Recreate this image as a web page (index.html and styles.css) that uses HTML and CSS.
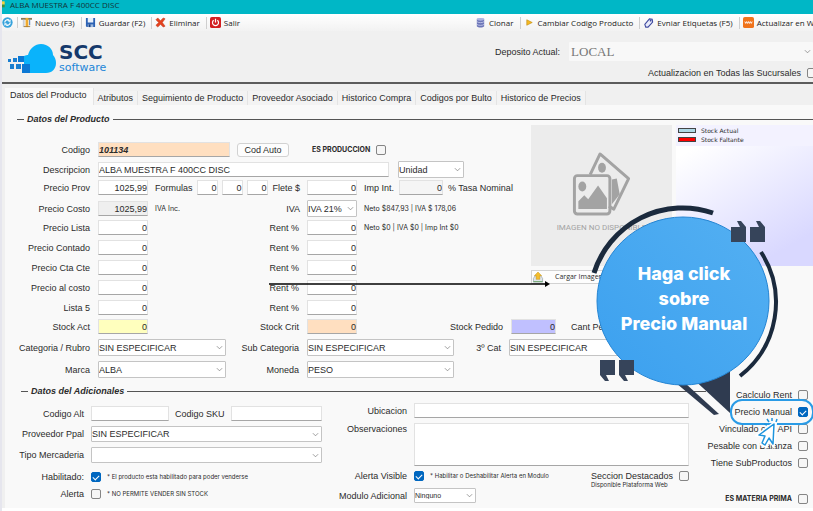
FILE: index.html
```html
<!DOCTYPE html>
<html lang="es">
<head>
  <meta charset="UTF-8" />
  <meta name="viewport" content="width=device-width, initial-scale=1.0"/>
  <title>ALBA MUESTRA F 400CC DISC</title>
  <link rel="stylesheet" href="styles.css">
</head>
<body>
  <div class="window">
    <div class="title-bar">
      <svg class="title-icon" viewBox="0 0 6 10"><rect width="4" height="5" y="1" fill="#f5d13c"/><rect width="4" height="4" y="6" fill="#3f8f3c"/></svg>
      <span>ALBA MUESTRA F 400CC DISC</span>
    </div>

    <div class="toolbar">
      <div class="tools">
        <button class="tool" aria-label="Actualizar">
          <svg viewBox="0 0 12 12"><circle cx="6" cy="6" r="5.6" fill="#38a3dc"/><path d="M3 6a3 3 0 0 1 5-2.2M9 6a3 3 0 0 1-5 2.2" fill="none" stroke="#fff" stroke-width="1.4"/><path d="M9.4 2.4v2.8H6.6zM2.6 9.600V6.800h2.800z" fill="#fff"/></svg>
        </button>
        <button class="tool">
          <svg viewBox="0 0 12 12"><path d="M0 1h12v2H0z" fill="#8d7a55"/><path d="M2 3h2v8H2z" fill="#c9ced6"/><path d="M5 1h3v10H5z" fill="#efaa2f"/><path d="M9 3h1v6H9z" fill="#3d6fb5"/><path d="M3 10h7v1H3z" fill="#a77c38"/></svg>
          Nuevo (F3)
        </button>
        <button class="tool">
          <svg viewBox="0 0 12 12"><path d="M1 1h10v10H2L1 10z" fill="#2c62b4"/><path d="M3 1h6v5H3z" fill="#e9f0fa"/><path d="M3 8h6v3H3z" fill="#9db9de"/><path d="M4 8h2v3H4z" fill="#173f80"/></svg>
          Guardar (F2)
        </button>
        <button class="tool">
          <svg viewBox="0 0 12 12"><path d="M1 3l2-2 3 3 3-3 2 1-3 4 3 4-2 1-3-3-3 3-2-2 3-3z" fill="#e5431f" stroke="#b52c10" stroke-width=".5"/></svg>
          Eliminar
        </button>
        <button class="tool">
          <svg viewBox="0 0 12 12"><rect width="12" height="12" rx="2" fill="#d31f22"/><path d="M4 3.500a3.300 3.300 0 1 0 4 0M6 2v4" fill="none" stroke="#fff" stroke-width="1.300"/></svg>
          Salir
        </button>
      </div>
      <div class="tools tools-right">
        <button class="tool">
          <svg viewBox="0 0 12 12"><path d="M2 2v8c1 2 7 2 8 0V2z" fill="#6d76b8"/><ellipse cx="6" cy="2.500" rx="4" ry="1.500" fill="#aeb5e2"/><path d="M2 5c1 1.500 7 1.500 8 0M2 8c1 1.500 7 1.500 8 0" fill="none" stroke="#d5d9f3" stroke-width=".8"/></svg>
          Clonar
        </button>
        <button class="tool">
          <svg viewBox="0 0 12 12"><path d="M3 3l6 3-6 3z" fill="#f5b921" stroke="#b98208" stroke-width=".6"/></svg>
          Cambiar Codigo Producto
        </button>
        <button class="tool">
          <svg viewBox="0 0 12 12"><path d="M2 8l5-6 3 .5.500 3-5 5.500H3z" fill="#e9ebfa" stroke="#3f4aa0" stroke-width="1.200"/><circle cx="8.300" cy="4" r="1" fill="#3f4aa0"/></svg>
          Evniar Etiquetas (F5)
        </button>
        <button class="tool">
          <svg viewBox="0 0 12 12"><rect width="12" height="12" rx="2" fill="#f0731b"/><path d="M2 5l1 2 1-2 1 2 1-2 1 2 1-2 1 2 1-2" fill="none" stroke="#fff" stroke-width="1"/></svg>
          Actualizar en Web
        </button>
      </div>
    </div>

    <header>
      <div class="logo">
        <svg class="logo-cloud" viewBox="0 0 48 30">
          <path d="M16 29V12c2-1 3-1 4-1C22 4 27 0 33 0c7 0 12 5 12 11 2 2 3 5 3 8 0 6-4 10-10 10z" fill="#0ab3fb" />
          <path d="M10 12h6v6h-6zM14 20h8v9h-8z" fill="#0b78d4"/>
          <path d="M5 14h4v4H5zM8 20h5v5H8zM2 20h4v5H2zM0 15h3v3H0z" fill="#1a7fd0"/>
        </svg>
        <div class="logo-text">
          <strong>SCC</strong>
          <span>software</span>
        </div>
      </div>
      <div class="branch">
        <div class="branch-row">
          <label for="deposito">Deposito Actual:</label>
          <select id="deposito" class="deposito" disabled><option>LOCAL</option></select>
        </div>
        <div class="branch-row branch-all">
          <label for="todas">Actualizacion en Todas las Sucursales</label>
          <input type="checkbox" id="todas">
        </div>
      </div>
    </header>

    <nav class="tabs">
      <a href="#producto" class="active">Datos del Producto</a>
      <a href="#atributos">Atributos</a>
      <a href="#seguimiento">Seguimiento de Producto</a>
      <a href="#proveedor">Proveedor Asociado</a>
      <a href="#compra">Historico Compra</a>
      <a href="#bulto">Codigos por Bulto</a>
      <a href="#precios">Historico de Precios</a>
    </nav>

    <main class="panel" id="producto">
      <h2 class="section-title">Datos del Producto</h2>

      <div class="product-top">
        <div class="product-form">
          <div class="rows rows-tight">
            <div class="code-row">
              <label for="codigo">Codigo</label>
              <input type="text" id="codigo" class="code" value="101134">
              <button class="btn">Cod Auto</button>
              <span class="check strong">
                <label for="produccion">ES PRODUCCION</label>
                <input type="checkbox" id="produccion">
              </span>
            </div>
            <div class="desc-row">
              <label for="descripcion">Descripcion</label>
              <input type="text" id="descripcion" value="ALBA MUESTRA F 400CC DISC">
              <select aria-label="Unidad"><option>Unidad</option></select>
            </div>
            <div class="price-row">
              <label for="prov">Precio Prov</label>
              <input type="text" id="prov" class="num" value="1025,99">
              <div class="formulas">
                <label for="f1">Formulas</label>
                <input type="text" id="f1" class="num" value="0">
                <input type="text" aria-label="Formula 2" class="num" value="0">
                <input type="text" aria-label="Formula 3" class="num" value="0">
                <label for="flete" class="flete">Flete $</label>
              </div>
              <input type="text" id="flete" class="num" value="0">
              <div class="tax">
                <label for="imp">Imp Int.</label>
                <input type="text" id="imp" class="num readonly" value="0" readonly>
                <span>% Tasa Nominal</span>
              </div>
            </div>
          </div>

          <div class="rows">
            <div class="price-row">
              <label for="costo">Precio Costo</label>
              <input type="text" id="costo" class="num gray" value="1025,99" readonly>
              <div class="iva"><small>IVA Inc.</small><label for="iva">IVA</label></div>
              <select id="iva"><option>IVA 21%</option></select>
              <small class="net">Neto $847,93 | IVA $ 178,06</small>
            </div>
            <div class="price-row">
              <label for="lista">Precio Lista</label>
              <input type="text" id="lista" class="num" value="0">
              <label for="r1">Rent %</label>
              <input type="text" id="r1" class="num" value="0">
              <small class="net">Neto $0 | IVA $0 | Imp Int $0</small>
            </div>
            <div class="price-row">
              <label for="contado">Precio Contado</label>
              <input type="text" id="contado" class="num" value="0">
              <label for="r2">Rent %</label>
              <input type="text" id="r2" class="num" value="0">
            </div>
            <div class="price-row">
              <label for="cta">Precio Cta Cte</label>
              <input type="text" id="cta" class="num" value="0">
              <label for="r3">Rent %</label>
              <input type="text" id="r3" class="num" value="0">
            </div>
            <div class="price-row">
              <label for="alcosto">Precio al costo</label>
              <input type="text" id="alcosto" class="num" value="0">
              <label for="r4">Rent %</label>
              <input type="text" id="r4" class="num" value="0">
            </div>
            <div class="price-row">
              <label for="lista5">Lista 5</label>
              <input type="text" id="lista5" class="num" value="0">
              <label for="r5">Rent %</label>
              <input type="text" id="r5" class="num" value="0">
            </div>
          </div>
        </div>

        <div class="media">
          <div class="picture">
            <svg viewBox="0 0 60 66">
              <g fill="none" stroke="#a3a3a3" stroke-width="3" stroke-linejoin="round">
                <path d="M18 23L28 2l29 25-15 31-5-3"/>
                <rect x="2" y="24" width="36" height="39" rx="3"/>
              </g>
              <g fill="#a3a3a3">
                <ellipse cx="30" cy="16" rx="4" ry="5"/>
                <ellipse cx="10" cy="35" rx="4" ry="5"/>
                <path d="M6 58V50l6-6 4 4 10-14 9 13v11zM40 28l5-1 3 16-8 10z"/>
              </g>
            </svg>
            <span>IMAGEN NO DISPONIBLE</span>
          </div>
          <div class="chart">
            <ul class="chart-legend">
              <li><i class="swatch actual"></i>Stock Actual</li>
              <li><i class="swatch faltante"></i>Stock Faltante</li>
            </ul>
          </div>
          <button class="btn upload">
            <svg viewBox="0 0 12 12"><path d="M1 7l2-3h6l2 3v4H1z" fill="#dfe6ea" stroke="#8d9aa3" stroke-width=".7"/><path d="M1 10h10v1H1z" fill="#6ba56a"/><path d="M6 0l4 4H8v4H4V4H2z" fill="#f3bd2d" stroke="#c58f10" stroke-width=".5"/></svg>
            Cargar Imagen
          </button>
        </div>
      </div>

      <div class="stock-row">
        <label for="stock">Stock Act</label>
        <input type="text" id="stock" class="num yellow" value="0">
        <label for="crit">Stock Crit</label>
        <input type="text" id="crit" class="num peach" value="0">
        <label for="pedido">Stock Pedido</label>
        <input type="text" id="pedido" class="num violet" value="0">
        <span class="cant">Cant Pedido</span>
      </div>
      <div class="category-row">
        <label for="categoria">Categoria / Rubro</label>
        <select id="categoria"><option>SIN ESPECIFICAR</option></select>
        <label for="subcat">Sub Categoria</label>
        <select id="subcat"><option>SIN ESPECIFICAR</option></select>
        <label for="cat3">3º Cat</label>
        <select id="cat3"><option>SIN ESPECIFICAR</option></select>
      </div>
      <div class="category-row">
        <label for="marca">Marca</label>
        <select id="marca"><option>ALBA</option></select>
        <label for="moneda">Moneda</label>
        <select id="moneda"><option>PESO</option></select>
      </div>

      <div class="extra">
        <div class="extra-main">
          <h2 class="section-title">Datos del Adicionales</h2>
          <div class="extra-grid">
            <div class="extra-left">
              <div class="extra-row">
                <label for="alt">Codigo Alt</label>
                <input type="text" id="alt" class="alt">
                <label for="sku" class="sku-label">Codigo SKU</label>
                <input type="text" id="sku" class="fill">
              </div>
              <div class="extra-row">
                <label for="ppal">Proveedor Ppal</label>
                <select id="ppal" class="fill"><option>SIN ESPECIFICAR</option></select>
              </div>
              <div class="extra-row">
                <label for="tipo">Tipo Mercaderia</label>
                <select id="tipo" class="fill"><option></option></select>
              </div>
              <div class="extra-row flag first-flag">
                <label for="habilitado">Habilitado:</label>
                <input type="checkbox" id="habilitado" checked>
                <small>* El producto esta habilitado para poder venderse</small>
              </div>
              <div class="extra-row flag">
                <label for="alerta">Alerta</label>
                <input type="checkbox" id="alerta">
                <small>* NO PERMITE VENDER SIN STOCK</small>
              </div>
            </div>

            <div class="extra-center">
              <div class="extra-row">
                <label for="ubicacion">Ubicacion</label>
                <input type="text" id="ubicacion" class="fill">
              </div>
              <div class="extra-row notes">
                <label for="obs">Observaciones</label>
                <textarea id="obs" class="fill"></textarea>
              </div>
              <div class="extra-row flag">
                <label for="visible">Alerta Visible</label>
                <input type="checkbox" id="visible" checked>
                <small>* Habilitar o Deshabilitar Alerta en Modulo</small>
                <span class="check featured">
                  <label for="destacados">Seccion Destacados <small>Disponible Plataforma Web</small></label>
                  <input type="checkbox" id="destacados">
                </span>
              </div>
              <div class="extra-row module">
                <label for="modulo">Modulo Adicional</label>
                <select id="modulo"><option>Ninguno</option></select>
              </div>
            </div>
          </div>
        </div>

        <div class="options">
          <span class="check"><label for="rent">Caclculo Rent</label><input type="checkbox" id="rent"></span>
          <span class="check"><label for="manual">Precio Manual</label><input type="checkbox" id="manual" checked></span>
          <span class="check"><label for="api">Vinculado con API</label><input type="checkbox" id="api"></span>
          <span class="check"><label for="balanza">Pesable con Balanza</label><input type="checkbox" id="balanza"></span>
          <span class="check"><label for="sub">Tiene SubProductos</label><input type="checkbox" id="sub"></span>
          <span class="check strong last"><label for="materia">ES MATERIA PRIMA</label><input type="checkbox" id="materia"></span>
        </div>
      </div>
    </main>

    <svg class="overlay" width="813" height="511" viewBox="0 0 813 511">
      <defs>
        <linearGradient id="bubble" x1="0" y1="1" x2="1" y2="0">
          <stop offset="0" stop-color="#3ba0ef"/>
          <stop offset="1" stop-color="#54b0f2"/>
        </linearGradient>
      </defs>
      <!-- pointer line -->
      <path d="M269 284h277" stroke="#000" stroke-width="1.500"/>
      <path d="M545 281l5 3-5 3z" fill="#000"/>
      <!-- bubble tail -->
      <path d="M690 376l40-8v45z" fill="#2f3b50"/>
      <path d="M676 383l9 0 34 31-5 1z" fill="#2f3b50"/>
      <!-- bubble and rings -->
      <ellipse cx="683" cy="301" rx="86" ry="84" fill="url(#bubble)" stroke="#2585d3"/>
      <path d="M594 273A93 93 0 0 1 713 213" fill="none" stroke="#1b2a3d" stroke-width="5"/>
      <path d="M761 252A93 93 0 0 1 740 376" fill="none" stroke="#1b2a3d" stroke-width="4"/>
      <!-- quotes -->
      <g fill="#36445a">
        <path d="M731 227h9l-3-6h4l5 6v15h-15zM750 227h9l-3-6h4l5 6v15h-15z"/>
        <path d="M600 360h15v15h-9l3 6h-4l-5-6zM619 360h15v15h-9l3 6h-4l-5-6z"/>
      </g>
      <!-- highlighted option -->
      <rect x="731" y="400" width="82" height="24" rx="11" fill="none" stroke="#2a9be6" stroke-width="2"/>
      <!-- cursor -->
      <path d="M775 423l-16 12 6 1-3 8 4 2 3-8 4 6z" fill="#fff" stroke="#fff" stroke-width="4"/>
      <path d="M774 424l-15 11 6 1-3 7 3 2 4-7 4 6z" fill="#fff" stroke="#1d94dd" stroke-width="1.500" stroke-linejoin="round"/>
      <path d="M772 418v3M767 419l2 3M777 419l-1 3M764 424l3 1" stroke="#1d94dd" stroke-width="1.500"/>
    </svg>
    <div class="callout">Haga click<br>sobre<br>Precio Manual</div>
  </div>
</body>
</html>
```

FILE: styles.css
```css
:root {
  --text: #2b2b2b;
  --window-bg: #f0f0f0;
  --panel-bg: #f9f9f9;
  --border: #e2e2e2;
  --border-dark: #a6a6a6;
  --teal: #00b7c6;
  --accent: #0067c0;
  --ui-font: "Open Sans", "Noto Sans", sans-serif;
  --small-font: Inter, "Liberation Sans", sans-serif;
}

* {
  margin: 0;
  padding: 0;
  box-sizing: border-box;
}
body {
  font-family: "Liberation Sans", Arial, sans-serif;
  font-size: 9px;
  line-height: 12px;
  color: var(--text);
  background: #fff;
  border-left: 2px solid #e6e6ee;
  overflow: hidden;
  min-height: 100vh;
}
.window {
  background: var(--window-bg);
}
label,
small,
span {
  white-space: nowrap;
}
small {
  font-family: var(--small-font);
  font-size: 7px;
}

.title-bar {
  background: var(--teal);
  height: 14px;
  display: flex;
  gap: 4px;
  font-family: var(--ui-font);
  font-size: 8px;
  line-height: 10px;
  color: #12343a;
}
.title-icon {
  width: 4px;
  height: 8px;
}

.toolbar {
  display: flex;
  justify-content: space-between;
  height: 17px;
  background: linear-gradient(#fff, #f2f2f2);
}
.tools {
  display: flex;
  align-items: center;
}
.tools-right {
  flex: 0 0 338px;
  overflow: hidden;
}
.tool {
  display: flex;
  flex: none;
  align-items: center;
  gap: 3px;
  padding: 0 6px 0 3px;
  border: none;
  border-right: 1px solid #cfcfcf;
  background: none;
  font-family: var(--ui-font);
  font-size: 8px;
  line-height: 12px;
  color: #222;
  white-space: nowrap;
}
.tool:first-child {
  padding-left: 0;
}
.tools:first-child .tool:first-child {
  padding-right: 4px;
}
.tool:last-child {
  border-right: none;
}
.tool svg {
  width: 11px;
  height: 11px;
}

header {
  display: flex;
  justify-content: space-between;
  height: 53px;
  padding: 11px 0 0 6px;
  border-bottom: 2px solid #5c5c5c;
}
.logo {
  display: flex;
  gap: 3px;
  padding-top: 2px;
}
.logo-cloud {
  width: 48px;
  height: 30px;
}
.logo-text {
  font-family: "DejaVu Sans", sans-serif;
  display: flex;
  flex-direction: column;
}
.logo-text strong {
  font-size: 20px;
  line-height: 17px;
  color: #15396b;
}
.logo-text span {
  font-size: 11px;
  line-height: 13px;
  color: #1c86d8;
}
.branch {
  flex: 0 0 318px;
}
.branch-row {
  display: flex;
  align-items: center;
  gap: 9px;
}
select.deposito {
  flex: 1;
  height: 19px;
  padding: 0 2px;
  border: none;
  font-family: "Liberation Serif", serif;
  font-size: 13px;
  color: #777;
  background-color: #f8f8f8;
  opacity: 1;
}
.branch-all {
  justify-content: flex-end;
  gap: 6px;
  margin: 6px -4px 0 0;
}

.tabs {
  display: flex;
  align-items: flex-end;
  padding: 4px 0 0 3px;
}
.tabs a {
  padding: 1px 4px;
  border-right: 1px solid #e4e4e4;
  background: #f3f3f3;
  color: var(--text);
  text-decoration: none;
}
.tabs .active {
  padding: 1px 6px 4px 5px;
  background: var(--panel-bg);
}

.panel {
  margin-left: 3px;
  padding: 8px 0 4px;
  background: var(--panel-bg);
}
.section-title {
  display: flex;
  align-items: center;
  gap: 3px;
  padding-left: 12px;
  font-size: 9px;
  line-height: 12px;
  font-style: italic;
}
.section-title::before,
.section-title::after {
  content: '';
  height: 1px;
  background: #555;
}
.section-title::before {
  width: 7px;
}
.section-title::after {
  flex: 1;
}

/* fields */
input[type="text"],
textarea,
select {
  width: 100%;
  min-width: 0;
  height: 15px;
  padding: 0 1px;
  border: 1px solid var(--border);
  border-bottom-color: var(--border-dark);
  background-color: #fff;
  font-family: inherit;
  font-size: 9px;
  color: var(--text);
}
input[type="text"] {
  padding: 0;
}
textarea {
  height: 43px;
  resize: none;
}
select {
  appearance: none;
  height: 17px;
  padding: 0;
  border: 1px solid #c4c4c4;
  border-radius: 1px;
  background-image: url("data:image/svg+xml,%3Csvg xmlns='http://www.w3.org/2000/svg' viewBox='0 0 8 5'%3E%3Cpath d='M1 1l3 3 3-3' fill='none' stroke='%23777' stroke-width='.8'/%3E%3C/svg%3E");
  background-repeat: no-repeat;
  background-position: right 2px center;
  background-size: 7px 5px;
}
input[type="checkbox"] {
  appearance: none;
  display: grid;
  place-items: center;
  flex: none;
  width: 10px;
  height: 10px;
  border: 1px solid #858585;
  border-radius: 2px;
  background: #f6f6f6;
}
input[type="checkbox"]:checked {
  border-color: var(--accent);
  background: var(--accent);
}
input[type="checkbox"]:checked::after {
  content: '';
  width: 5px;
  height: 3px;
  border: solid #fff;
  border-width: 0 0 1px 1px;
  transform: rotate(-45deg);
}
input.num {
  text-align: right;
}
input.gray {
  background: #efefef;
}
input.readonly {
  background: #f5f5f5;
}
input.yellow {
  background: #ffffbe;
}
input.peach,
input.code {
  background: #ffdfc0;
}
input.violet {
  background: #c0c0ff;
}
input.code {
  font-weight: bold;
  font-style: italic;
}
.btn {
  height: 14px;
  border: 1px solid #d2d2d2;
  border-radius: 3px;
  background: #fdfdfd;
  font-family: inherit;
  font-size: 9px;
  line-height: 12px;
  color: var(--text);
}
.check {
  display: flex;
  align-items: center;
  gap: 6px;
}
.strong {
  font-family: var(--small-font);
  font-size: 7px;
  font-weight: bold;
}

/* product data */
.product-top {
  display: flex;
}
.product-form {
  flex: 0 0 526px;
  padding-top: 17px;
}
.rows {
  display: flex;
  flex-direction: column;
  gap: 5px;
}
.rows-tight {
  gap: 4px;
  margin-bottom: 5px;
}
.code-row,
.desc-row,
.price-row,
.stock-row,
.category-row {
  display: grid;
  align-items: center;
  column-gap: 7px;
  height: 15px;
}
.code-row > label,
.desc-row > label,
.price-row > label,
.stock-row > label,
.category-row > label {
  padding-right: 1px;
  text-align: right;
}
.code-row {
  grid-template-columns: 86px 132px 52px 1fr;
}
.code-row .check {
  padding-left: 16px;
}
.desc-row {
  grid-template-columns: 86px 291px 66px;
}
.desc-row select {
  margin-left: 2px;
}
.price-row {
  grid-template-columns: 86px 50px 145px 50px 1fr;
}
.formulas,
.tax,
.iva {
  display: flex;
  align-items: center;
}
.formulas {
  gap: 4px;
}
.formulas input[type="text"] {
  flex: 0 0 21px;
}
.flete {
  margin-left: auto;
}
.tax {
  gap: 5px;
}
.tax input[type="text"] {
  flex: 0 0 44px;
}
.iva {
  justify-content: space-between;
}
.stock-row {
  grid-template-columns: 86px 50px 145px 50px 140px 45px 1fr;
  margin-top: 4px;
}
.cant {
  padding-left: 8px;
}
.category-row {
  grid-template-columns: 86px 128px 67px 147px 41px 148px;
  height: 17px;
  margin-top: 5px;
}

/* picture and stock chart */
.media {
  flex: 1;
  display: grid;
  grid-template-columns: 141px 1fr;
  grid-template-rows: 141px 14px;
  gap: 4px;
}
.picture {
  display: flex;
  flex-direction: column;
  align-items: center;
  gap: 5px;
  padding-top: 27px;
  background: #ececec;
  color: #a3a3a3;
  font-family: Roboto, sans-serif;
  font-size: 8px;
}
.picture svg {
  width: 60px;
  height: 65px;
}
.chart {
  background: linear-gradient(150deg, #fff 15%, #d9d8ff 85%);
}
.chart-legend {
  height: 21px;
  padding: 1px 2px;
  list-style: none;
  background: #f3f2ff;
  font-family: "DejaVu Sans", sans-serif;
  font-size: 6px;
  line-height: 9px;
}
.chart-legend li {
  display: flex;
  align-items: center;
  gap: 5px;
}
.swatch {
  width: 18px;
  height: 5px;
  border: 1px solid #444;
}
.actual {
  background: #add8e6;
}
.faltante {
  background: #f00;
}
.upload {
  display: flex;
  align-items: center;
  gap: 11px;
  border-radius: 0;
  font-family: var(--ui-font);
  font-size: 7px;
}
.upload svg {
  width: 12px;
  height: 11px;
}

/* additional data */
.extra {
  display: flex;
  margin-top: 7px;
}
.extra-main {
  flex: 1;
}
.extra-main .section-title {
  padding-left: 16px;
}
.extra-grid {
  display: grid;
  grid-template-columns: 317px 1fr;
  padding: 6px 17px 0 0;
}
.extra-left {
  padding-top: 3px;
}
.extra-row {
  display: flex;
  align-items: center;
  gap: 6px;
  margin-bottom: 5px;
}
.extra-row > label:first-child {
  flex: 0 0 80px;
  padding-right: 1px;
  text-align: right;
}
.extra-left select {
  height: 16px;
}
.extra-row .alt {
  flex: 0 0 78px;
}
.sku-label {
  flex: none;
}
.extra-row .fill {
  flex: 1;
}
.flag {
  height: 10px;
  margin-bottom: 7px;
}
.first-flag {
  margin-top: 9px;
}
.flag small {
  font-size: 6px;
}
.extra-center .extra-row > label:first-child {
  flex-basis: 86px;
}
.notes {
  align-items: flex-start;
}
.featured {
  align-self: flex-start;
  align-items: flex-start;
  margin-left: auto;
}
.featured label {
  line-height: 10px;
}
.featured small {
  display: block;
  line-height: 8px;
}
.module select {
  flex: 0 0 62px;
  height: 15px;
  font-size: 7px;
}
.extra-row:last-child {
  margin-bottom: 0;
}
.options {
  flex: 0 0 107px;
  display: flex;
  flex-direction: column;
  align-items: flex-end;
  gap: 7px;
  padding: 5px 5px 0 0;
}
.options .check {
  height: 10px;
}
.options .last {
  margin-top: 19px;
}

/* tutorial marks over the form */
.overlay {
  position: absolute;
  top: 0;
  left: 0;
  pointer-events: none;
}
.callout {
  position: absolute;
  top: 261px;
  left: 597px;
  width: 174px;
  font-family: Inter, sans-serif;
  font-size: 18px;
  font-weight: 800;
  line-height: 25px;
  text-align: center;
  color: #fff;
}
```
